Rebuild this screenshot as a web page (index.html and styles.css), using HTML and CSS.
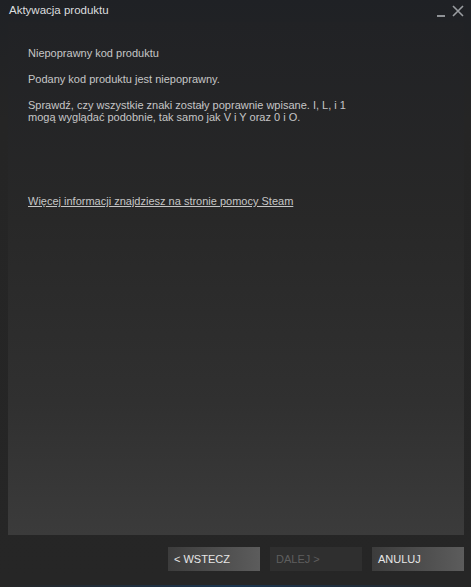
FILE: index.html
```html
<!DOCTYPE html>
<html>
<head>
<meta charset="utf-8">
<link rel="stylesheet" href="styles.css">
</head>
<body>
<div class="window">
  <div class="titlebar">
    <span class="title">Aktywacja produktu</span>
    <div class="controls">
      <svg class="min" width="10" height="10" viewBox="0 0 10 10"><rect x="0" y="8" width="8" height="2" fill="#8f9296"/></svg>
      <svg class="close" width="12" height="12" viewBox="0 0 12 12"><path d="M1 1 L11 11 M11 1 L1 11" stroke="#9a9da1" stroke-width="1.6"/></svg>
    </div>
  </div>
  <div class="panel">
    <p class="line">Niepoprawny kod produktu</p>
    <p class="line">Podany kod produktu jest niepoprawny.</p>
    <p class="line">Sprawdź, czy wszystkie znaki zostały poprawnie wpisane. I, L, i 1<br>mogą wyglądać podobnie, tak samo jak V i Y oraz 0 i O.</p>
    <a class="help" href="#">Więcej informacji znajdziesz na stronie pomocy Steam</a>
  </div>
  <div class="footer">
    <button class="btn">&lt; WSTECZ</button>
    <button class="btn disabled">DALEJ &gt;</button>
    <button class="btn">ANULUJ</button>
  </div>
  <div class="bottomline"></div>
</div>
</body>
</html>
```
FILE: styles.css
```css
html, body {
  margin: 0;
  padding: 0;
  background: #262626;
}
.window {
  width: 471px;
  height: 587px;
  display: flex;
  flex-direction: column;
  background: linear-gradient(to bottom, #1f2125 0px, #252525 120px, #262626 587px);
  font-family: "Liberation Sans", Arial, sans-serif;
  font-size: 11px;
}
.titlebar {
  height: 20px;
  display: flex;
  align-items: flex-start;
  justify-content: space-between;
  padding: 2px 7px 0 9px;
}
.title {
  color: #dcdedf;
  font-size: 11.5px;
  line-height: 16px;
}
.controls {
  display: flex;
  align-items: flex-start;
  gap: 5px;
  padding-top: 3px;
}
.min { margin-top: 2px; }
.panel {
  margin: 0 7px 0 8px;
  height: 513px;
  padding: 25px 20px 0 20px;
  box-sizing: border-box;
  background: linear-gradient(to bottom, #212225 0px, #282828 200px, #303030 380px, #3b3b3b 513px);
  display: flex;
  flex-direction: column;
  align-items: flex-start;
}
.line {
  margin: 0 0 14px 0;
  color: #c6c6c6;
  line-height: 12px;
}
.help {
  margin-top: 58px;
  color: #c6c6c6;
  text-decoration: underline;
  line-height: 12px;
}
.footer {
  display: flex;
  justify-content: flex-end;
  gap: 10px;
  padding: 12px 7px 0 0;
  height: 35px;
}
.btn {
  width: 92px;
  height: 24px;
  border: none;
  padding: 0 0 0 6px;
  text-align: left;
  font-family: "Liberation Sans", Arial, sans-serif;
  font-size: 11px;
  color: #e6e6e6;
  background: linear-gradient(to right, #3c3c3c, #5c5c5c);
}
.btn.disabled {
  color: #5e5e5e;
  background: #2f2f2f;
}
.bottomline {
  height: 2px;
  margin-top: auto;
  background: linear-gradient(to right, #262626, #1b3550 50%, #262626);
}
```
